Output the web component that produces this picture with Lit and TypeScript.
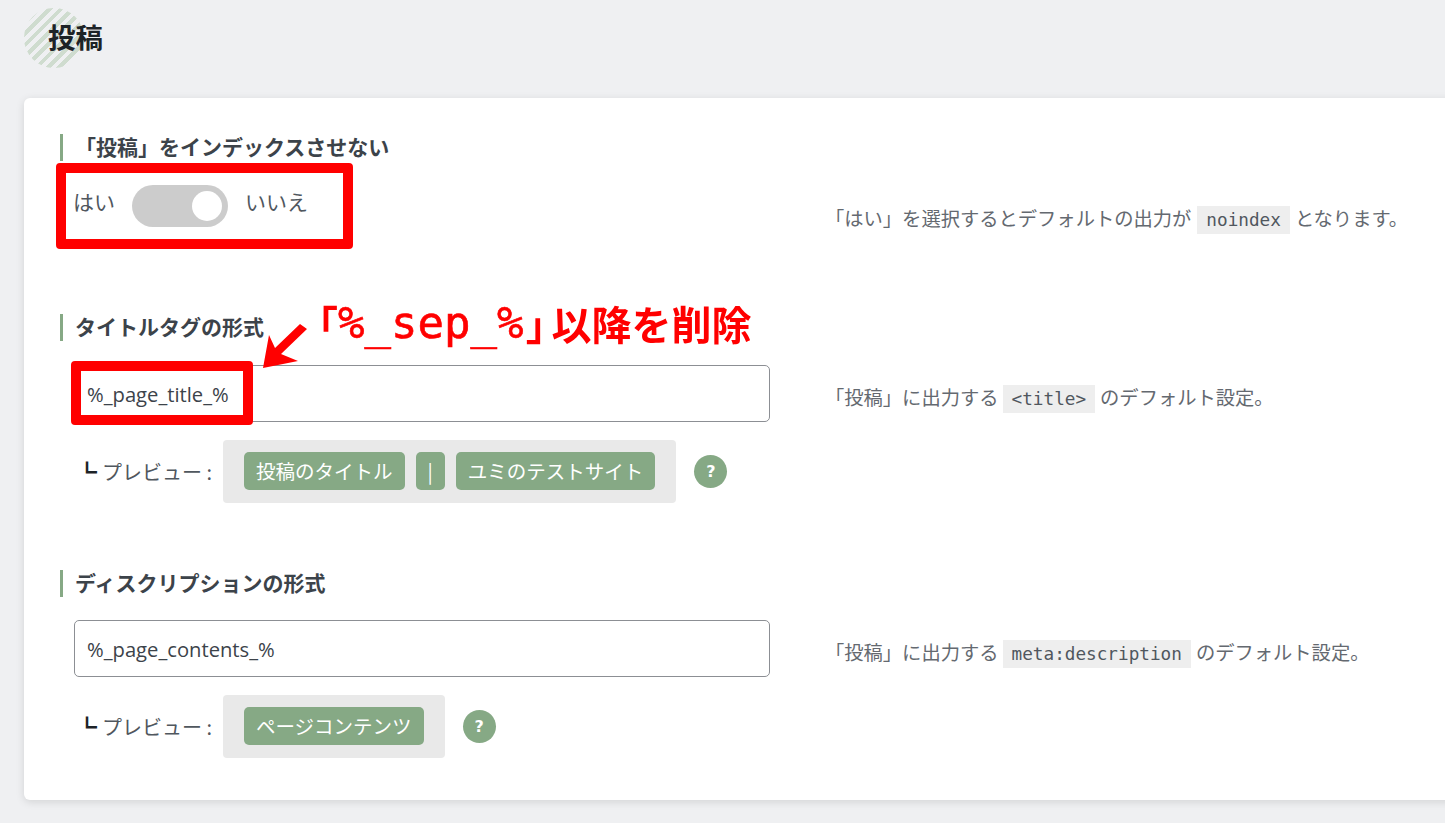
import { LitElement, html, css } from "lit";
import { customElement } from "lit/decorators.js";

@customElement("app-root")
export class AppRoot extends LitElement {
  static styles = css`
    :host {
      display: block;
      position: relative;
      width: 1445px;
      height: 823px;
      overflow: hidden;
      background: #eff0f2;
      color: #50575e;
      font-family: "Open Sans", "Noto Sans CJK JP", sans-serif;
      font-size: 20px;
    }
    .jp { font-family: "Noto Sans CJK JP", sans-serif; }
    .head { height: 98px; display: flex; align-items: center; padding-left: 24px; box-sizing: border-box; position: relative; }
    .badge {
      width: 60px; height: 60px; border-radius: 50%; margin-top: -22px; flex: none;
      background: repeating-linear-gradient(-45deg, #cfdccf 0 4px, #eff0f2 4px 8px);
    }
    h1 { margin: -25px 0 0 -36px; font-size: 27.5px; font-weight: 700; color: #1d2327; position: relative; line-height: 1; }
    .card {
      margin-left: 24px; width: 1440px; box-sizing: border-box; background: #fff; border-radius: 6px;
      padding: 36px 0 42px 36px; box-shadow: 0 2px 8px rgba(0,0,0,.12);
    }
    h2 {
      margin: 0; height: 27px; line-height: 25px; padding-left: 12px; border-left: 3px solid #86a985;
      font-size: 21px; font-weight: 700; color: #3c434a; box-sizing: content-box;
    }
    .sec1 { margin-bottom: 61px; }
    .sec2 { margin-bottom: 67px; }
    .row { display: grid; grid-template-columns: 765px 1fr; }
    .row1 { margin-top: 24px; height: 68px; }
    .row2 { margin-top: 24px; }
    .row3 { margin-top: 23px; }
    .row2 .desc, .row3 .desc { padding-top: 9px; }
    .toggle-line { display: flex; align-items: flex-start; height: 42px; line-height: 32px; padding-left: 13px; font-size: 21px; color: #50575e; }
    .toggle {
      width: 96px; height: 42px; border-radius: 21px; background: #ccc; margin: 0 17px; position: relative; flex: none;
    }
    .toggle i { position: absolute; width: 30px; height: 30px; border-radius: 50%; background: #fff; right: 6px; top: 6px; }
    .desc { align-self: center; font-size: 19.3px; color: #646970; white-space: nowrap; line-height: 30px; }
    code {
      font-family: "DejaVu Sans Mono", monospace; font-size: 17.7px; background: #eee; padding: 4px 9px; margin: 0 5px 0 4px; color: #50575e;
    }
    .row1 code { margin-left: 6px; }
    .input {
      margin-left: 14px; width: 696px; height: 57px; box-sizing: border-box; border: 1px solid #8c8f94; border-radius: 5px;
      padding: 1px 12px 0; display: flex; align-items: center; color: #3c434a; font-size: 20.2px;
    }
    .prev { display: flex; align-items: center; margin-top: 18px; padding-left: 17px; }
    .prev-label { width: 146px; flex: none; font-size: 20px; color: #50575e; white-space: nowrap; }
    .prev-label b { font-weight: 700; color: #1d2327; font-size: 20px; margin-right: 5px; }
    .tags { display: flex; gap: 11px; padding: 12px 21px 13px; background: #e9e9e9; border-radius: 4px; height: 38px; }
    .tag { height: 38px; line-height: 38px; padding: 0 12px; border-radius: 5px; background: #86a985; color: #fff; font-size: 19.5px; white-space: nowrap; }
    .tag.sep { transform: translateZ(0); }
    .help { width: 33px; height: 33px; border-radius: 50%; background: #86a985; color: #fff; font-weight: 700; font-size: 16px; text-align: center; line-height: 33px; margin-left: 18px; font-family: "DejaVu Sans", sans-serif; }
    .redbox { position: absolute; border: 10px solid #f00; border-radius: 4px; box-sizing: border-box; }
    .rb1 { left: 56px; top: 163px; width: 297px; height: 86px; }
    .rb2 { left: 71px; top: 361px; width: 182px; height: 64px; }
    .note { position: absolute; left: 298px; top: 294px; height: 58px; color: #f00; font-size: 40px; font-weight: 700; line-height: 58px; white-space: nowrap; }
    .note .m { font-family: "DejaVu Sans Mono", monospace; font-size: 44px; font-weight: 400; line-height: 1; vertical-align: 2px; -webkit-text-stroke: 0.6px #f00; }
    .note .close { font-feature-settings: "palt"; margin: 0 5px 0 3px; }
    .arrow { position: absolute; left: 0; top: 0; }
  `;

  render() {
    return html`
      <div class="head"><div class="badge"></div><h1 class="jp">投稿</h1></div>
      <div class="card">
        <section class="sec1">
          <h2 class="jp">「投稿」をインデックスさせない</h2>
          <div class="row row1">
            <div class="toggle-line jp"><span>はい</span><div class="toggle"><i></i></div><span>いいえ</span></div>
            <div class="desc jp">「はい」を選択するとデフォルトの出力が<code>noindex</code>となります。</div>
          </div>
        </section>
        <section class="sec2">
          <h2 class="jp">タイトルタグの形式</h2>
          <div class="row row2">
            <div class="input">%_page_title_%</div>
            <div class="desc jp">「投稿」に出力する<code>&lt;title&gt;</code>のデフォルト設定。</div>
          </div>
          <div class="prev">
            <div class="prev-label jp"><b>┗</b>プレビュー :</div>
            <div class="tags jp"><span class="tag">投稿のタイトル</span><span class="tag sep">|</span><span class="tag">ユミのテストサイト</span></div>
            <div class="help">?</div>
          </div>
        </section>
        <section>
          <h2 class="jp">ディスクリプションの形式</h2>
          <div class="row row3">
            <div class="input">%_page_contents_%</div>
            <div class="desc jp">「投稿」に出力する<code>meta:description</code>のデフォルト設定。</div>
          </div>
          <div class="prev">
            <div class="prev-label jp"><b>┗</b>プレビュー :</div>
            <div class="tags jp"><span class="tag">ページコンテンツ</span></div>
            <div class="help">?</div>
          </div>
        </section>
      </div>
      <div class="redbox rb1"></div>
      <div class="redbox rb2"></div>
      <svg class="arrow" width="1445" height="823" viewBox="0 0 1445 823"><polygon fill="#f00" points="263,368 269,335 275,348 300,324 307,329 281,354 298,361"/></svg>
      <div class="note jp">「<span class="m">%_sep_%</span><span class="close">」</span>以降を削除</div>
    `;
  }
}
